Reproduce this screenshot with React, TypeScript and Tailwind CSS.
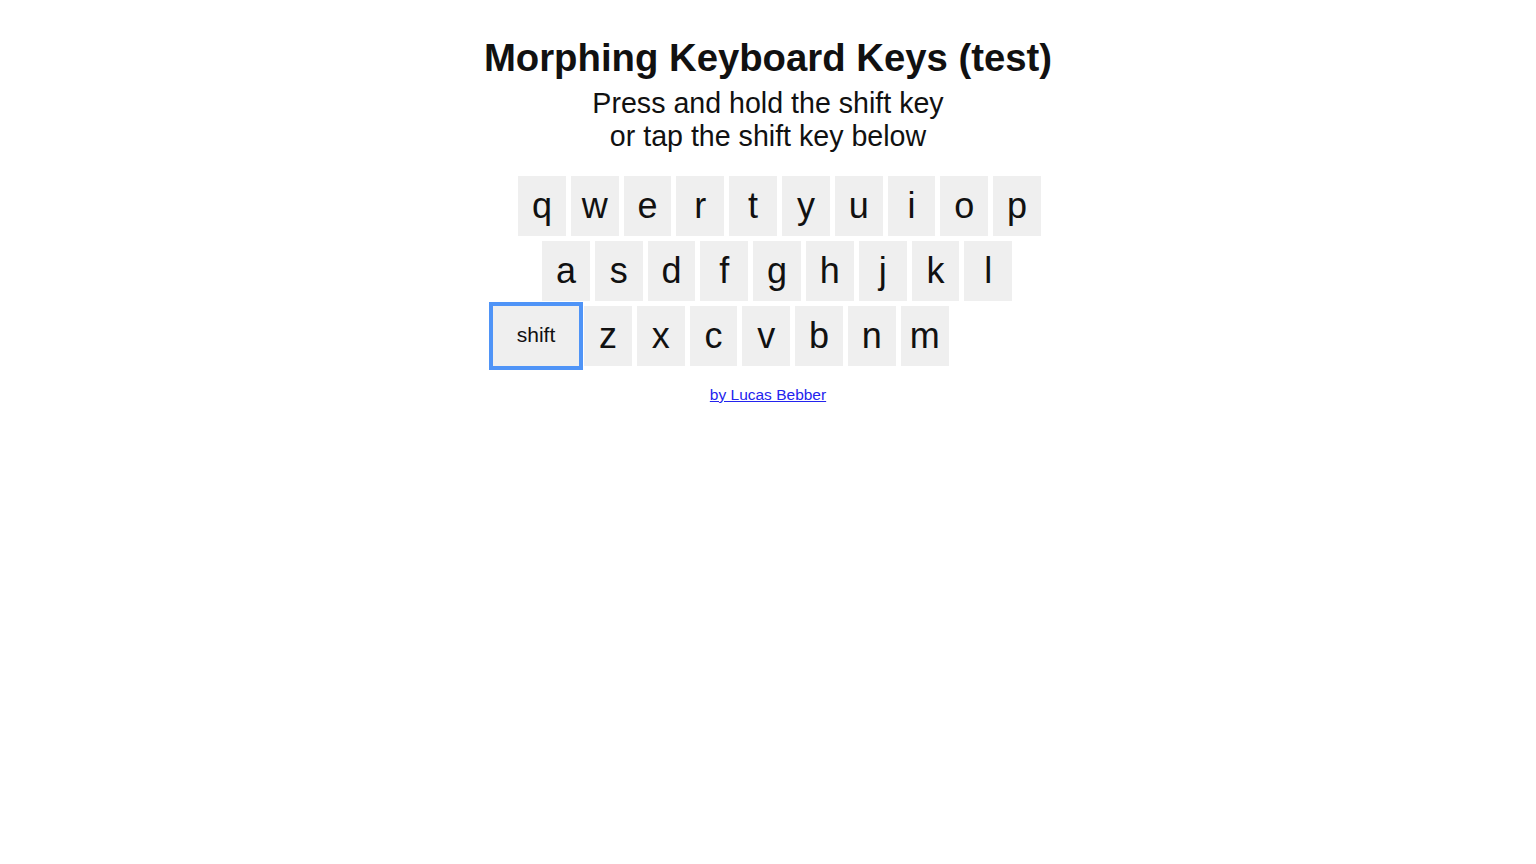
import { useEffect, useState } from 'react'

const ROWS = [
  { keys: 'qwertyuiop'.split(''), offset: 'ml-[30px]' },
  { keys: 'asdfghjkl'.split(''), offset: 'ml-[54px]' },
  { keys: 'zxcvbnm'.split(''), offset: 'ml-[5px]' },
]

function Key({ label, shifted }: { label: string; shifted: boolean }) {
  return (
    <div className="w-[47.8px] h-[60px] bg-[#efefef] flex items-center justify-center text-[36px] leading-[60px] text-[#111] select-none">
      {shifted ? label.toUpperCase() : label}
    </div>
  )
}

export default function App() {
  const [shifted, setShifted] = useState(false)

  useEffect(() => {
    const down = (e: KeyboardEvent) => e.key === 'Shift' && setShifted(true)
    const up = (e: KeyboardEvent) => e.key === 'Shift' && setShifted(false)
    window.addEventListener('keydown', down)
    window.addEventListener('keyup', up)
    return () => {
      window.removeEventListener('keydown', down)
      window.removeEventListener('keyup', up)
    }
  }, [])

  return (
    <main className="min-h-screen bg-white font-['Liberation_Sans',Arial,sans-serif] text-[#111]">
      <div className="flex flex-col items-center pt-[36px]">
        <h1 className="text-[38.3px] leading-[44px] font-bold">Morphing Keyboard Keys (test)</h1>
        <p className="mt-[7px] text-[28.6px] leading-[33px] text-center">
          Press and hold the shift key
          <br />
          or tap the shift key below
        </p>
      </div>

      {/* Keyboard */}
      <div className="w-[560px] mx-auto mt-[23px] flex flex-col gap-[5px]">
        {ROWS.map((row, i) => (
          <div key={i} className={`flex gap-[5px] ${row.offset}`}>
            {i === 2 && (
              <button
                onClick={() => setShifted(s => !s)}
                className="w-[86px] h-[60px] bg-[#efefef] outline-[4px] outline-solid outline-[#4f94f7] text-[21px] text-[#111] flex items-center justify-center pb-[2px]"
              >
                shift
              </button>
            )}
            {row.keys.map(k => (
              <Key key={k} label={k} shifted={shifted} />
            ))}
          </div>
        ))}
      </div>

      <div className="flex justify-center mt-[20px]">
        <a href="#" className="text-[15.5px] leading-[18px] text-[#2323ee] underline">
          by Lucas Bebber
        </a>
      </div>
    </main>
  )
}
